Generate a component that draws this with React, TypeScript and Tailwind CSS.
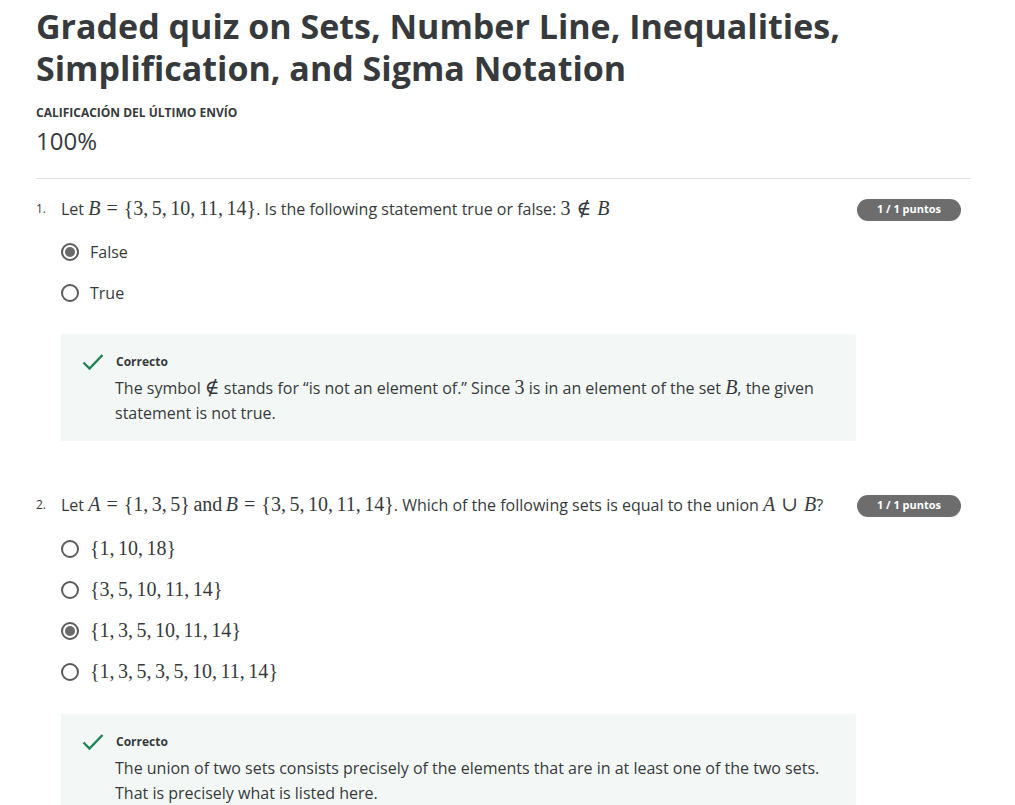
import React from "react";

const M = ({ children, i }: { children: React.ReactNode; i?: boolean }) => (
  <span
    className={"text-[20px] leading-none [word-spacing:-1.5px] " + (i ? "italic" : "")}
    style={{ fontFamily: '"Liberation Serif", "DejaVu Serif", serif' }}
  >
    {children}
  </span>
);

// relation sign with KaTeX-like spacing
const Rel = ({ children }: { children: React.ReactNode }) => (
  <span
    className="mx-[6px] text-[20px] leading-none"
    style={{ fontFamily: '"Liberation Serif", "DejaVu Serif", serif' }}
  >
    {children}
  </span>
);

function Radio({ checked }: { checked?: boolean }) {
  return (
    <span className="flex h-[18px] w-[18px] shrink-0 items-center justify-center rounded-full border-2 border-[#5b5b5b] bg-white">
      {checked && <span className="h-[10px] w-[10px] rounded-full bg-[#6a6a6a]" />}
    </span>
  );
}

function Badge() {
  return (
    <span className="mr-[10px] mt-[1px] flex h-[22px] w-[104px] shrink-0 items-center justify-center rounded-full bg-[#6d6d6d] text-[11px] font-bold text-white">
      1 / 1 puntos
    </span>
  );
}

function Check() {
  return (
    <svg width="22" height="18" viewBox="0 0 22 18" className="shrink-0">
      <path d="M1.5 9.5 L7.5 15.5 L20.5 2" fill="none" stroke="#1f8354" strokeWidth="2.4" />
    </svg>
  );
}

function Option({ checked, children }: { checked?: boolean; children: React.ReactNode }) {
  return (
    <div className="flex h-[41px] items-center gap-[11px] pl-[25px]">
      <Radio checked={checked} />
      <span className="text-[16px] text-[#373a3c]">{children}</span>
    </div>
  );
}

function Feedback({ children }: { children: React.ReactNode }) {
  return (
    <div className="ml-[25px] w-[795px] bg-[#f3f8f6] pb-[15px] pl-[21px] pt-[19px]">
      <div className="flex items-center gap-[12px]">
        <Check />
        <span className="text-[12px] font-bold text-[#373a3c]">Correcto</span>
      </div>
      <p className="mt-[5px] w-[750px] pl-[33px] text-[16px] leading-[25px] text-[#373a3c]">
        {children}
      </p>
    </div>
  );
}

function QuestionRow({ n, children }: { n: string; children: React.ReactNode }) {
  return (
    <div className="flex items-center">
      <span className="w-[25px] shrink-0 text-[12px] text-[#373a3c]">{n}</span>
      <div className="flex-1 text-[16px] text-[#373a3c]">{children}</div>
      <Badge />
    </div>
  );
}

export default function App() {
  return (
    <div
      className="h-[805px] w-[1015px] overflow-hidden bg-white text-[#373a3c]"
      style={{ fontFamily: '"Open Sans", "Noto Sans", sans-serif' }}
    >
      <div className="ml-[36px] w-[935px] pt-[5px]">
        <h1 className="text-[34px] font-bold leading-[42px] text-[#373a3c]">
          Graded quiz on Sets, Number Line, Inequalities,
          <br />
          Simplification, and Sigma Notation
        </h1>
        <div className="mt-[15px] text-[12px] font-bold">CALIFICACIÓN DEL ÚLTIMO ENVÍO</div>
        <div className="mt-[4px] text-[24px] leading-[30px]">100%</div>
        <div className="mt-[22px] h-px bg-[#e1e1e1]" />

        <div className="mt-[18px]">
          <QuestionRow n="1.">
            Let <M i>B</M>
            <Rel>=</Rel>
            <M>{"{"}3, 5, 10, 11, 14{"}"}</M>. Is the following statement true or false: <M>3</M>
            <Rel>∉</Rel>
            <M i>B</M>
          </QuestionRow>
          <div className="mt-[10px]">
            <Option checked>False</Option>
            <Option>True</Option>
          </div>
          <div className="mt-[21px]">
            <Feedback>
              The symbol <M>∉</M> stands for “is not an element of.” Since <M>3</M> is in an element of the set <M i>B</M>, the given statement is not true.
            </Feedback>
          </div>
        </div>

        <div className="mt-[52px]">
          <QuestionRow n="2.">
            Let <M i>A</M>
            <Rel>=</Rel>
            <M>{"{"}1, 3, 5{"}"} and </M>
            <M i>B</M>
            <Rel>=</Rel>
            <M>{"{"}3, 5, 10, 11, 14{"}"}</M>. Which of the following sets is equal to the union <M i>A</M>
            <Rel>∪</Rel>
            <M i>B</M>?
          </QuestionRow>
          <div className="mt-[11px]">
            <Option>
              <M>{"{"}1, 10, 18{"}"}</M>
            </Option>
            <Option>
              <M>{"{"}3, 5, 10, 11, 14{"}"}</M>
            </Option>
            <Option checked>
              <M>{"{"}1, 3, 5, 10, 11, 14{"}"}</M>
            </Option>
            <Option>
              <M>{"{"}1, 3, 5, 3, 5, 10, 11, 14{"}"}</M>
            </Option>
          </div>
          <div className="mt-[22px]">
            <Feedback>
              The union of two sets consists precisely of the elements that are in at least one of the two sets. That is precisely what is listed here.
            </Feedback>
          </div>
        </div>
      </div>
    </div>
  );
}
